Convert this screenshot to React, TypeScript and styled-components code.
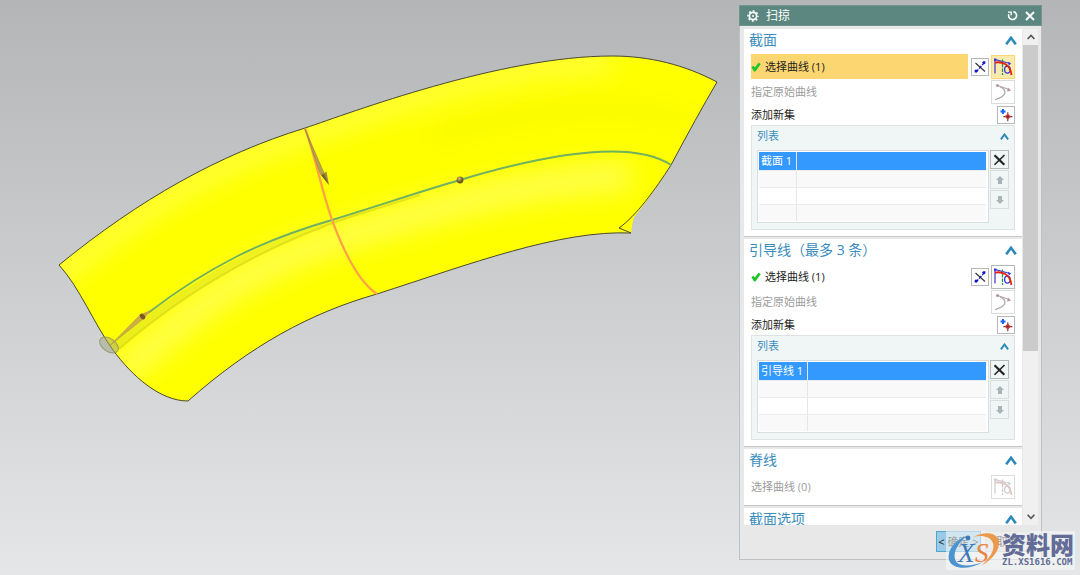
import React from 'react';
import styled, { createGlobalStyle } from 'styled-components';

const GlobalStyle = createGlobalStyle`
  *, *::before, *::after { box-sizing: border-box; }
  body {
    margin: 0;
    font-family: "Open Sans", "Noto Sans CJK SC", sans-serif;
    font-size: 11px;
    line-height: 16px;
    color: #222;
  }
  h1, h2, h3 { margin: 0; font-weight: 400; }
  button { font: inherit; padding: 0; margin: 0; }
`;

const Page = styled.div`
  position: relative;
  display: flex;
  align-items: flex-start;
  height: 100vh;
  padding-right: 38px;
  overflow: hidden;
  background: linear-gradient(#b4b5b7, #e5e6e8);
`;

const Viewport = styled.main`
  flex: 1;
  min-width: 0;
`;

const Model = styled.svg`
  display: block;
  width: 100%;
`;

const Dialog = styled.section`
  display: flex;
  flex-direction: column;
  flex: 0 0 303px;
  height: calc(100vh - 20px);
  margin-top: 5px;
  border: 1px solid #bfc0c2;
  border-top: 0;
  background: #e8e8e8;
`;

const TitleBar = styled.header`
  display: flex;
  align-items: center;
  flex: 0 0 21px;
  gap: 7px;
  margin: 0 -1px;
  padding: 0 6px 0 7px;
  border: 1px solid #6f958e;
  background: #5b8780;
  color: #fff;
`;

const DialogTitle = styled.h1`
  flex: 1;
  font-size: 12px;
  line-height: 18px;
`;

const BarButton = styled.button`
  display: flex;
  border: 0;
  background: none;
  color: inherit;
`;

const Body = styled.div`
  display: flex;
  flex: 1;
  min-height: 0;
  padding: 3px 3px 0 4px;
`;

const Groups = styled.div`
  flex: 1;
  overflow: hidden;
`;

const Group = styled.section`
  margin-bottom: 2px;
  padding: 0 7px 6px;
  border-bottom: 1px solid #c6c6c6;
  background: #fff;
`;

const GroupHead = styled.div`
  display: flex;
  align-items: center;
  justify-content: space-between;
  height: 22px;
  margin: 0 -2px 3px;
`;

const GroupTitle = styled.h2`
  font-size: 14px;
  line-height: 22px;
  color: #3a8dbd;
`;

const Toggle = styled.button`
  display: flex;
  border: 0;
  background: none;
  color: #2c89b8;
`;

const Row = styled.div`
  display: flex;
  align-items: center;
  gap: 2px;
  height: 25px;
`;

const ShortRow = styled(Row)`
  height: 21px;
`;

const Label = styled.span<{ $muted?: boolean; $active?: boolean }>`
  display: flex;
  align-items: center;
  flex: 1;
  gap: 4px;
  height: 25px;
  margin-right: 1px;
  background: ${p => (p.$active ? '#fcd671' : 'transparent')};
  color: ${p => (p.$muted ? '#9c9c9c' : '#222')};
`;

const Tool = styled.button<{ $size: number; $active?: boolean; $faded?: boolean }>`
  display: flex;
  align-items: center;
  justify-content: center;
  flex: none;
  width: ${p => p.$size}px;
  height: ${p => p.$size}px;
  border: 1px solid ${p => (p.$active ? '#fcd671' : p.$faded ? '#d9dddd' : '#b5b8b8')};
  background: ${p => (p.$active ? '#faeaae' : 'transparent')};
`;

const ListPanel = styled.div`
  padding: 0 5px 6px;
  border: 1px solid #dde2e2;
  background: #f0f6f6;
`;

const ListHead = styled.div`
  display: flex;
  align-items: center;
  justify-content: space-between;
  height: 20px;
  margin-bottom: 4px;
`;

const ListTitle = styled.h3`
  font-size: 11px;
  line-height: 20px;
  color: #3a8dbd;
`;

const ListArea = styled.div`
  display: flex;
  align-items: flex-start;
  gap: 1px;
`;

const TableFrame = styled.div`
  flex: 1;
  padding: 1px 2px 1px 1px;
  border: 1px solid #d9dddd;
  background: #fff;
`;

const Table = styled.table`
  width: 100%;
  border-collapse: collapse;
`;

const Tr = styled.tr<{ $selected?: boolean; $shade?: boolean }>`
  height: ${p => (p.$selected ? '18px' : '17px')};
  background: ${p => (p.$selected ? '#3399ff' : p.$shade ? '#f9f9f9' : '#fff')};
  color: #fff;
`;

const Td = styled.td`
  padding: 0 2px;
  border-bottom: 1px solid #ececec;
  line-height: 16px;
  white-space: nowrap;
  &:first-child { border-right: 1px solid #e4e6e8; }
  ${Tr}:last-child & { border-bottom: 0; }
`;

const FirstCol = styled.col<{ $width: number }>`
  width: ${p => p.$width}px;
`;

const ListTools = styled.div`
  display: flex;
  flex-direction: column;
  gap: 1px;
`;

const ScrollBar = styled.div`
  display: flex;
  flex-direction: column;
  flex: 0 0 15px;
  margin-left: 1px;
  background: #f0f0f0;
`;

const ScrollButton = styled.button`
  display: flex;
  align-items: center;
  justify-content: center;
  flex: 0 0 16px;
  border: 0;
  background: none;
`;

const Track = styled.div`
  flex: 1;
`;

const Thumb = styled.div`
  height: 66%;
  background: #cbcbcb;
`;

const Footer = styled.footer`
  display: flex;
  flex: 0 0 34px;
  justify-content: flex-end;
  gap: 4px;
  padding: 6px 11px 7px 0;
`;

const ActionButton = styled.button<{ $primary?: boolean }>`
  width: 45px;
  border: 1px solid ${p => (p.$primary ? '#4ea6d3' : '#cccccc')};
  background: ${p => (p.$primary ? '#9acbe6' : '#dedede')};
  color: #111;
`;

const Watermark = styled.aside`
  position: absolute;
  right: 5px;
  bottom: 5px;
  display: flex;
  width: 129px;
  height: 39px;
  background: rgba(247, 248, 249, 0.6);
  color: #626c97;
`;

const MarkLogo = styled.svg`
  flex: none;
  overflow: visible;
`;

const MarkText = styled.div`
  display: flex;
  flex-direction: column;
  white-space: nowrap;
`;

const MarkName = styled.strong`
  font-family: "Noto Sans CJK SC", sans-serif;
  font-size: 24px;
  font-weight: 900;
  line-height: 26px;
`;

const MarkUrl = styled.span`
  font-family: "DejaVu Sans Mono", monospace;
  font-size: 9px;
  font-weight: 700;
  line-height: 10px;
`;

const Chevron = ({ w = 12, h = 9, stroke = 2.6 }: { w?: number; h?: number; stroke?: number }) => (
  <svg width={w} height={h} viewBox="0 0 12 9" fill="none" stroke="currentColor" strokeWidth={stroke}>
    <path d="M1.2 8.3 6 1.8l4.8 6.5" />
  </svg>
);

const Gear = () => (
  <svg width="12" height="12" viewBox="0 0 12 12" fill="none" stroke="#fff">
    <circle cx="6" cy="6" r="3.6" strokeWidth="1.7" />
    <circle cx="6" cy="6" r="5" strokeWidth="1.6" strokeDasharray="1.9 2.03" strokeDashoffset="0.95" />
    <circle cx="6" cy="6" r="1" fill="#fff" stroke="none" />
  </svg>
);

const Reset = () => (
  <svg width="11" height="11" viewBox="0 0 11 11" fill="none" stroke="#fff" strokeWidth="1.6">
    <path d="M6.4 1.6a4 4 0 1 1-4.6 2.6" />
    <path d="M1 2.2h3.2v3" strokeWidth="1.3" />
  </svg>
);

const Close = () => (
  <svg width="10" height="10" viewBox="0 0 10 10" stroke="#fff" strokeWidth="1.9">
    <path d="M1 1l8 8M9 1L1 9" />
  </svg>
);

const Check = () => (
  <svg width="10" height="10" viewBox="0 0 10 10">
    <path d="M.4 5.2 2.4 3.800l1.400 1.700L7.600.8l2.200 1.200L4.400 9.400H3z" fill="#1dc42c" />
  </svg>
);

const Reverse = () => (
  <svg width="14" height="14" viewBox="0 0 14 14">
    <path d="M2.500 3l9.500 8.500" stroke="#333" strokeWidth="1.200" />
    <path d="M3 12 11.500 2.500" stroke="#1414c8" strokeWidth="1.300" strokeDasharray="3.400 1.200" />
    <path d="M9 2.600 10.400 1.200h2v2L11 4.600zM1.600 10.400 3 9.200l2 1.900-1.300 1.500H1.600z" fill="#1414c8" />
  </svg>
);

const CurveRule = ({ faded }: { faded?: boolean }) => (
  <svg width="20" height="20" viewBox="0 0 20 20" fill="none" opacity={faded ? 0.38 : 1}>
    <path d="M2 16.500V2.500L17 6.500" stroke={faded ? '#77778c' : '#3c35d0'} strokeWidth="1.200" />
    <path d="M1 1.500h2.400v2.400H1z" fill={faded ? '#77778c' : '#3c35d0'} />
    <path d="M9.500 2.500v15.500" stroke={faded ? '#5f6f6a' : '#16936b'} strokeWidth="1.200" strokeDasharray="3.500 1" />
    <ellipse cx="14.400" cy="12.600" rx="2.800" ry="3.500" stroke={faded ? '#77778c' : '#3c35d0'} strokeWidth="1.300" />
    <path d="M15 4.800l3.200 1.800-2.400 1.800z" fill={faded ? '#77778c' : '#3c35d0'} />
    <path d="M2 5.600C8 4.400 17.500 6.500 18.400 18" stroke={faded ? '#b06a60' : '#e3200c'} strokeWidth="1.800" />
  </svg>
);

const OriginCurve = () => (
  <svg width="20" height="20" viewBox="0 0 20 20" fill="none">
    <path d="M4.500 3.500 17 7.800" stroke="#b9a5a5" strokeWidth="1.100" />
    <circle cx="4.500" cy="3.500" r="1.600" fill="#b99a9a" />
    <path d="M15 5.500l3 3.200-4 .8z" fill="#b99a9a" />
    <path d="M7 4.700C14 8 14.500 14.500 2 17.600" stroke="#ababab" strokeWidth="1.300" />
  </svg>
);

const AddSet = () => (
  <svg width="14" height="14" viewBox="0 0 14 14">
    <path d="M4 1v5M1.500 3.500h5" stroke="#1668ee" strokeWidth="2" />
    <path d="M8.800 4.200v9M4.400 8.600h9" stroke="#6b3434" strokeWidth="1.100" />
    <path d="M8.800 5.400l3.200 3.200-3.200 3.200-3.200-3.200z" fill="#e23b35" />
    <path d="M8.800 7v3.200M7.200 8.600h3.200" stroke="#6b3434" strokeWidth="1" />
  </svg>
);

const Remove = () => (
  <svg width="13" height="12" viewBox="0 0 13 12" stroke="#222">
    <path d="M1.500 1.200l9.800 9.600" strokeWidth="2.200" />
    <path d="M11.500 1 1.500 10.800" strokeWidth="1.600" />
  </svg>
);

const Arrow = ({ down }: { down?: boolean }) => (
  <svg width="8" height="8" viewBox="0 0 8 8" fill="#a9b4b6">
    <path d={down ? 'M4 8 0 4h2V0h4v4h2z' : 'M4 0l4 4H6v4H2V4H0z'} />
  </svg>
);

const ScrollMark = ({ down }: { down?: boolean }) => (
  <svg width="8" height="6" viewBox="0 0 8 6" fill="none" stroke="#555" strokeWidth="1.600">
    <path d={down ? 'M.6.8 4 4.400 7.400.8' : 'M.6 5 4 1.400 7.400 5'} />
  </svg>
);

const topEdge = 'M59 265C140 199 218 155 305 128C350 113 500 56 612 56C650 56 685 65 717 82';
const rightEdge = 'Q696 118 671 165C655 190 636 216 619 228';
const bottomEdge = 'C560 230 470 264 377 294C310 313 250 346 188 401';
const leftEdge = 'C160 401 132 376 113 350C94 324 80 288 59 265';

const SweepModel = () => (
  <Model viewBox="0 0 739 575" role="img" aria-label="扫掠">
    <defs>
      <clipPath id="sheet">
        <path d={`${topEdge}Q696 118 671 165C660 183 646 203 634 217Q632 224 631 233${bottomEdge}${leftEdge}Z`} />
      </clipPath>
      <filter id="soft" x="-20%" y="-20%" width="140%" height="140%">
        <feGaussianBlur stdDeviation="12" />
      </filter>
      <linearGradient id="groove" gradientUnits="userSpaceOnUse" x1="110" y1="0" x2="440" y2="0">
        <stop offset="0" stopColor="#d6dc22" />
        <stop offset="0.7" stopColor="#e2e81c" />
        <stop offset="1" stopColor="#ffff00" />
      </linearGradient>
      <radialGradient id="ball" cx="0.4" cy="0.3">
        <stop offset="0" stopColor="#d8bf6a" />
        <stop offset="1" stopColor="#6b5420" />
      </radialGradient>
    </defs>
    <g clipPath="url(#sheet)">
      <path d="M40 40H739V420H40Z" fill="#ffff00" />
      <g filter="url(#soft)" fill="none">
        <path d="M50 284C140 206 222 161 305 134C355 117 500 62 612 62" stroke="#ffff4a" strokeWidth="18" />
        <path d="M120 376C200 300 260 262 345 236C430 210 520 182 630 176" stroke="#ffff48" strokeWidth="30" />
        <path d="M430 138C520 112 600 100 690 118" stroke="#f7f700" strokeWidth="16" opacity="0.8" />
      </g>
      <path d="M112 342C190 280 262 240 332 220L440 186C390 204 370 210 350 217C270 244 190 288 118 350Z" fill="url(#groove)" opacity="0.5" />
      <path d="M119 349C190 288 270 244 350 217L420 195" fill="none" stroke="#cfcf14" strokeWidth="2" opacity="0.55" />
    </g>
    <path
      d={`${topEdge}${rightEdge}L631 233${bottomEdge}${leftEdge}`}
      fill="none"
      stroke="#4a4a30"
      strokeWidth="1"
    />
    <path d="M148 313C208 267 262 240 332 220C390 202 425 190 460 180C520 162 625 135 671 165" fill="none" stroke="#6fb061" strokeWidth="1.900" />
    <path d="M305 128C315 155 320 185 332 220C345 255 360 283 377 294" fill="none" stroke="#ffa048" strokeWidth="2.200" />
    <ellipse cx="109" cy="345" rx="10.500" ry="6.500" transform="rotate(35 109 345)" fill="#9fa67c" fillOpacity="0.5" stroke="#85875c" strokeOpacity="0.7" />
    <path d="M110.500 345 140 315l3 4z" fill="#cfae48" stroke="#a88a3c" strokeWidth="0.500" />
    <path d="M139 315 151 310 144 319z" fill="#c7a040" />
    <ellipse cx="142.500" cy="316.500" rx="3.200" ry="2.200" transform="rotate(50 142.500 316.500)" fill="#7a5a24" />
    <path d="M304.500 128 324 173l-3.500 1.500z" fill="#b8a254" stroke="#8f7a3c" strokeWidth="0.600" />
    <path d="M321 175l5.500-3.500 2.500 13.500z" fill="#a08a44" />
    <path d="M321 175l3-1 5 11z" fill="#75612c" />
    <circle cx="460" cy="180" r="3.400" fill="url(#ball)" />
  </Model>
);

const CurveSection = ({ title, item, colWidth, active }: { title: string; item: string; colWidth: number; active?: boolean }) => (
  <Group>
    <GroupHead>
      <GroupTitle>{title}</GroupTitle>
      <Toggle aria-label={`收起${title}`}><Chevron /></Toggle>
    </GroupHead>
    <Row>
      <Label $active={active}><Check />选择曲线 (1)</Label>
      <Tool $size={18} aria-label="反向"><Reverse /></Tool>
      <Tool $size={24} $active={active} aria-label="曲线"><CurveRule /></Tool>
    </Row>
    <Row>
      <Label $muted>指定原始曲线</Label>
      <Tool $size={24} $faded disabled aria-label="原始曲线"><OriginCurve /></Tool>
    </Row>
    <ShortRow>
      <Label>添加新集</Label>
      <Tool $size={18} aria-label="添加新集"><AddSet /></Tool>
    </ShortRow>
    <ListPanel>
      <ListHead>
        <ListTitle>列表</ListTitle>
        <Toggle aria-label="收起列表"><Chevron w={9} h={7} /></Toggle>
      </ListHead>
      <ListArea>
        <TableFrame>
          <Table>
            <colgroup><FirstCol $width={colWidth} /><col /></colgroup>
            <tbody>
              <Tr $selected><Td>{item}</Td><Td /></Tr>
              <Tr $shade><Td /><Td /></Tr>
              <Tr><Td /><Td /></Tr>
              <Tr $shade><Td /><Td /></Tr>
            </tbody>
          </Table>
        </TableFrame>
        <ListTools>
          <Tool $size={19} aria-label="移除"><Remove /></Tool>
          <Tool $size={19} $faded disabled aria-label="上移"><Arrow /></Tool>
          <Tool $size={19} $faded disabled aria-label="下移"><Arrow down /></Tool>
        </ListTools>
      </ListArea>
    </ListPanel>
  </Group>
);

export default function App() {
  return (
    <>
      <GlobalStyle />
      <Page>
        <Viewport><SweepModel /></Viewport>
        <Dialog aria-label="扫掠">
          <TitleBar>
            <Gear />
            <DialogTitle>扫掠</DialogTitle>
            <BarButton aria-label="重置"><Reset /></BarButton>
            <BarButton aria-label="关闭"><Close /></BarButton>
          </TitleBar>
          <Body>
            <Groups>
              <CurveSection title="截面" item="截面 1" colWidth={37} active />
              <CurveSection title="引导线（最多 3 条）" item="引导线 1" colWidth={48} />
              <Group>
                <GroupHead>
                  <GroupTitle>脊线</GroupTitle>
                  <Toggle aria-label="收起脊线"><Chevron /></Toggle>
                </GroupHead>
                <Row>
                  <Label $muted>选择曲线 (0)</Label>
                  <Tool $size={24} $faded disabled aria-label="曲线"><CurveRule faded /></Tool>
                </Row>
              </Group>
              <Group>
                <GroupHead>
                  <GroupTitle>截面选项</GroupTitle>
                  <Toggle aria-label="收起截面选项"><Chevron /></Toggle>
                </GroupHead>
              </Group>
            </Groups>
            <ScrollBar>
              <ScrollButton aria-label="向上滚动"><ScrollMark /></ScrollButton>
              <Track><Thumb /></Track>
              <ScrollButton aria-label="向下滚动"><ScrollMark down /></ScrollButton>
            </ScrollBar>
          </Body>
          <Footer>
            <ActionButton $primary>&lt; 确定 &gt;</ActionButton>
            <ActionButton>取消</ActionButton>
          </Footer>
        </Dialog>
        <Watermark>
          <MarkLogo width="56" height="39" viewBox="0 0 56 39">
            <path d="M21 5C9 9 1 19 3 29C6 39 24 39 37 31C24 36 11 36 9 28C7 20 13 11 21 5Z" fill="#4d93cf" />
            <path d="M27 6C38 0 51 1 53 10C54 19 47 28 35 35C44 27 49 19 47 12C44 5 35 4 27 6Z" fill="#eb9a4c" />
            <circle cx="22" cy="7" r="2.400" fill="#3f78b8" />
            <text x="12" y="31" fontFamily="Liberation Serif, serif" fontStyle="italic" fontSize="27" fill="#3f78b8">X</text>
            <text x="29" y="31" fontFamily="Liberation Serif, serif" fontStyle="italic" fontSize="27" fill="#ea8340">S</text>
          </MarkLogo>
          <MarkText>
            <MarkName>资料网</MarkName>
            <MarkUrl>ZL.XS1616.COM</MarkUrl>
          </MarkText>
        </Watermark>
      </Page>
    </>
  );
}
